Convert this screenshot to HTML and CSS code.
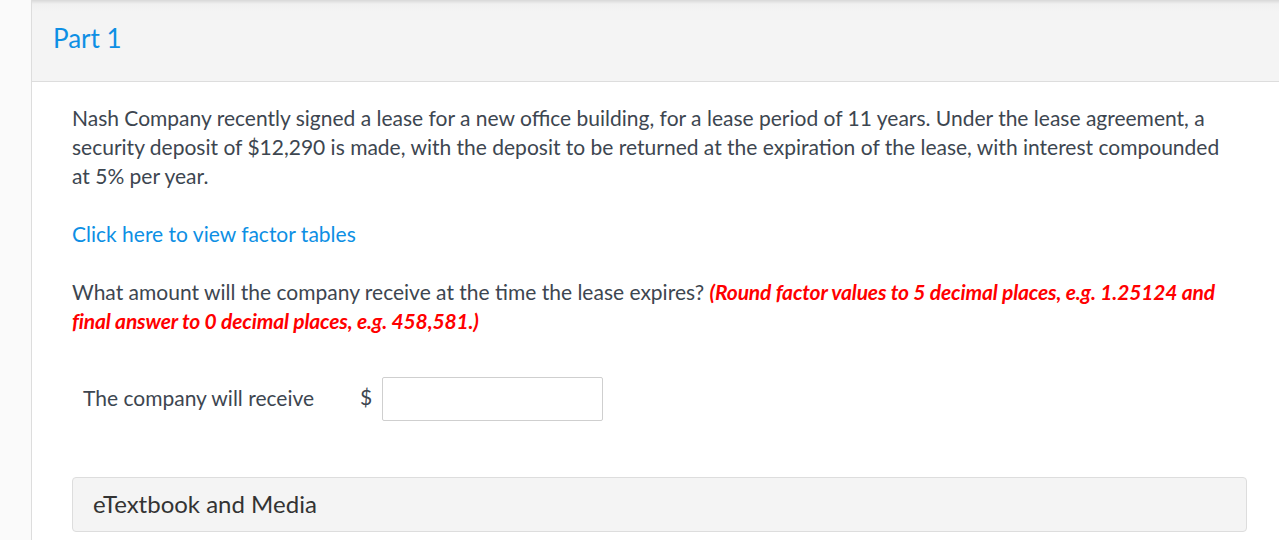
FILE: index.html
```html
<!DOCTYPE html>
<html lang="en">
<head>
    <meta charset="UTF-8">
    <meta name="viewport" content="width=device-width, initial-scale=1.0">
    <title>Part 1</title>
    <link rel="stylesheet" href="styles.css">
</head>
<body>
    <div class="page">
        <div class="side-strip"></div>
        <main class="question">
            <!-- Part header -->
            <header class="part-header">
                <h2 class="part-title">Part 1</h2>
            </header>

            <div class="question-body">
                <p class="question-text">
                    Nash Company recently signed a lease for a new office building, for a lease period of 11 years. Under the lease agreement, a security deposit of $12,290 is made, with the deposit to be returned at the expiration of the lease, with interest compounded at 5% per year.
                </p>

                <p class="factor-link-row">
                    <a href="#" class="factor-link">Click here to view factor tables</a>
                </p>

                <p class="question-text">
                    What amount will the company receive at the time the lease expires?
                    <span class="instruction">(Round factor values to 5 decimal places, e.g. 1.25124 and final answer to 0 decimal places, e.g. 458,581.)</span>
                </p>

                <div class="answer-row">
                    <span class="answer-label">The company will receive</span>
                    <span class="currency">$</span>
                    <input type="text" class="answer-input">
                </div>

                <div class="media-box">eTextbook and Media</div>
            </div>
        </main>
    </div>
</body>
</html>
```

FILE: styles.css
```css
* {
    margin: 0;
    padding: 0;
    box-sizing: border-box;
}

body {
    font-family: Lato, 'Noto Sans', sans-serif;
    color: #3d4650;
    background: #ffffff;
    overflow: hidden;
}

.page {
    display: flex;
    min-height: 540px;
}

.side-strip {
    width: 32px;
    flex-shrink: 0;
    background: #fafafa;
    border-right: 1px solid #dddddd;
}

.question {
    flex: 1;
}

.part-header {
    height: 82px;
    background: linear-gradient(180deg, #d8d8d8 0%, #f0f0f0 4px, #f4f4f4 12px, #f4f4f4 100%);
    border-bottom: 1px solid #dddddd;
    padding: 20px 21px 0 21px;
}

.part-title {
    font-size: 26px;
    font-weight: normal;
    color: #0d8fe4;
    line-height: 36px;
}

.question-body {
    padding: 21px 32px 0 40px;
}

.question-text {
    font-size: 21px;
    line-height: 29px;
    max-width: 1160px;
}

.factor-link-row {
    margin-top: 29px;
    font-size: 21px;
    line-height: 29px;
}

.factor-link {
    color: #0d8fe4;
    text-decoration: none;
}

.factor-link-row + .question-text {
    margin-top: 29px;
}

.instruction {
    color: #ff0000;
    font-weight: bold;
    font-style: italic;
    letter-spacing: -0.15px;
}

.answer-row {
    display: flex;
    align-items: center;
    margin-top: 42px;
    padding-left: 11px;
}

.answer-label {
    font-size: 21px;
    width: 277px;
    margin-top: -3px;
}

.currency {
    font-size: 21px;
    margin-right: 10px;
    margin-top: -6px;
}

.answer-input {
    width: 221px;
    height: 44px;
    border: 1px solid #cfcfcf;
    border-radius: 2px;
    background: #ffffff;
}

.media-box {
    margin-top: 56px;
    height: 55px;
    background: #f4f4f4;
    border: 1px solid #dddddd;
    border-radius: 4px;
    padding: 0 20px;
    font-size: 24px;
    line-height: 51px;
    color: #333333;
}
```
